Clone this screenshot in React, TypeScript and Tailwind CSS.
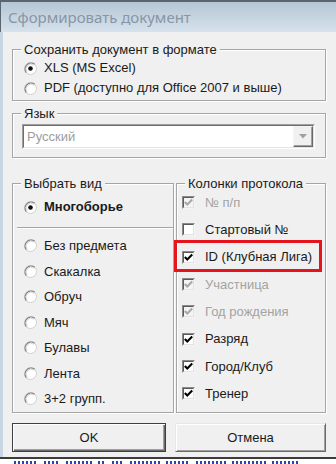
import React from "react";

function Radio({ checked }: { checked?: boolean }) {
  return (
    <svg width="13" height="13" viewBox="0 0 13 13" className="shrink-0">
      <circle cx="6.5" cy="6.5" r="6" fill="#fff" stroke="#cfcfcf" strokeWidth="1" />
      <path d="M2.3 10.7 A6 6 0 0 1 10.7 2.3" fill="none" stroke="#858585" strokeWidth="1.3" />
      <path d="M3.2 9.8 A4.7 4.7 0 0 1 9.8 3.2" fill="none" stroke="#d4d4d4" strokeWidth="1" />
      {checked && <circle cx="6.5" cy="6.5" r="2.3" fill="#111" />}
    </svg>
  );
}

function Check({ checked, disabled }: { checked?: boolean; disabled?: boolean }) {
  return (
    <div
      className={
        "w-[13px] h-[13px] shrink-0 border border-t-[#8a8a8a] border-l-[#8a8a8a] border-b-[#f4f4f4] border-r-[#f4f4f4] " +
        (disabled ? "bg-[#f4f4f4]" : "bg-white")
      }
    >
      <div className="w-full h-full border border-t-[#5a5a5a] border-l-[#5a5a5a] border-b-[#e3e3e3] border-r-[#e3e3e3] flex items-center justify-center">
        {checked && (
          <svg width="9" height="9" viewBox="0 0 9 9">
            <path
              d="M0.8 4 L3.3 6.6 L8.2 1.6"
              fill="none"
              stroke={disabled ? "#a8a8a8" : "#000"}
              strokeWidth="2.1"
            />
          </svg>
        )}
      </div>
    </div>
  );
}

function GroupBox({
  title,
  className,
  children,
}: {
  title: string;
  className?: string;
  children?: React.ReactNode;
}) {
  return (
    <div
      className={
        "relative border border-[#a5a5a5] shadow-[inset_1px_1px_0_#fff,1px_1px_0_#fff] " +
        (className ?? "")
      }
    >
      <div className="absolute -top-[8px] left-[8px] px-[3px] bg-[#f0f0f0] leading-[15px] text-[13px] text-[#1a1a1a]">
        {title}
      </div>
      {children}
    </div>
  );
}

function RadioRow({
  label,
  checked,
  bold,
  h,
}: {
  label: string;
  checked?: boolean;
  bold?: boolean;
  h: string;
}) {
  return (
    <div className={"flex items-center gap-[7px] " + h}>
      <Radio checked={checked} />
      <span className={"text-[13px] text-[#1a1a1a] " + (bold ? "font-bold" : "")}>{label}</span>
    </div>
  );
}

function CheckRow({
  label,
  checked,
  disabled,
}: {
  label: string;
  checked?: boolean;
  disabled?: boolean;
}) {
  return (
    <div className="flex items-center gap-[10px] h-[27.3px]">
      <Check checked={checked} disabled={disabled} />
      <span className={"text-[13px] " + (disabled ? "text-[#a3a3a3]" : "text-[#1a1a1a]")}>
        {label}
      </span>
    </div>
  );
}

export default function App() {
  const frags = [
    [14, 24],
    [44, 16],
    [66, 26],
    [98, 8],
    [112, 12],
    [130, 30],
    [166, 22],
    [196, 30],
    [232, 34],
    [272, 28],
  ];
  return (
    <div className="w-[336px] h-[464px] overflow-hidden flex flex-col bg-[#f0f0f0] font-['Liberation_Sans',Arial,sans-serif]">
      {/* Title bar */}
      <div className="h-[32px] shrink-0 border-t-2 border-l border-[#5b6570] bg-linear-to-b from-[#b6c6d5] to-[#d6e2ed] flex items-center pl-[7px]">
        <span className="text-[15px] text-[#8796a5] font-['Noto_Sans',sans-serif] leading-none pt-[1px]">
          Сформировать документ
        </span>
      </div>

      {/* Body */}
      <div className="h-[425px] shrink-0 border-l-[3px] border-[#c8d5e2] pl-[9px] pr-[10px] pt-[17px] flex flex-col">
        <GroupBox title="Сохранить документ в формате" className="h-[52px] pt-[8px] pl-[11px]">
          <RadioRow label="XLS (MS Excel)" checked h="h-[20px]" />
          <RadioRow label="PDF (доступно для Office 2007 и выше)" h="h-[20px]" />
        </GroupBox>

        <GroupBox title="Язык" className="mt-[12px] h-[45px] pt-[10px] pl-[9px]">
          <div className="w-[293px] h-[25px] border border-t-[#a0a0a0] border-l-[#a0a0a0] border-b-white border-r-white">
            <div className="w-full h-full border border-t-[#6e6e6e] border-l-[#6e6e6e] border-b-[#e3e3e3] border-r-[#e3e3e3] bg-white flex items-stretch">
              <div className="flex-1 flex items-center pl-[3px] text-[13px] text-[#9d9d9d]">Русский</div>
              <div className="w-[20px] bg-[#f0f0f0] border border-t-[#f4f4f4] border-l-[#f4f4f4] border-b-[#6a6a6a] border-r-[#6a6a6a] shadow-[inset_-1px_-1px_0_#a0a0a0] flex items-center justify-center">
                <svg width="8" height="5" viewBox="0 0 8 5">
                  <path d="M0 0 H8 L4 4.5 Z" fill="#a0a0a0" />
                </svg>
              </div>
            </div>
          </div>
        </GroupBox>

        <div className="mt-[25px] h-[230px] flex gap-[2px]">
          <GroupBox title="Выбрать вид" className="w-[162px] h-full pt-[10px]">
            <div className="pl-[11px]">
              <RadioRow label="Многоборье" checked bold h="h-[26px]" />
            </div>
            <div className="mt-[7px] ml-[4px] h-[2px] border-t border-[#a5a5a5] bg-white" />
            <div className="mt-[4px] pl-[11px]">
              <RadioRow label="Без предмета" h="h-[25.5px]" />
              <RadioRow label="Скакалка" h="h-[25.5px]" />
              <RadioRow label="Обруч" h="h-[25.5px]" />
              <RadioRow label="Мяч" h="h-[25.5px]" />
              <RadioRow label="Булавы" h="h-[25.5px]" />
              <RadioRow label="Лента" h="h-[25.5px]" />
              <RadioRow label="3+2 групп." h="h-[25.5px]" />
            </div>
          </GroupBox>

          <GroupBox title="Колонки протокола" className="flex-1 h-full pt-[5px] pl-[5px]">
            <CheckRow label="№ п/п" checked disabled />
            <CheckRow label="Стартовый №" />
            <CheckRow label="ID (Клубная Лига)" checked />
            <CheckRow label="Участница" checked disabled />
            <CheckRow label="Год рождения" checked disabled />
            <CheckRow label="Разряд" checked />
            <CheckRow label="Город/Клуб" checked />
            <CheckRow label="Тренер" checked />
            <div className="absolute left-[-3px] top-[56px] w-[148px] h-[32px] border-[3px] border-[#e5141c]" />
          </GroupBox>
        </div>

        <div className="mt-[10px] h-[29px] flex">
          <button className="w-[154px] h-full border border-[#3f3f3f] bg-[#f0f0f0] shadow-[inset_1px_1px_0_#fff,inset_-1px_-1px_0_#6a6a6a,inset_-2px_-2px_0_#a0a0a0] text-[13px] text-[#1a1a1a] flex items-center justify-center">
            OK
          </button>
          <button className="ml-auto w-[151px] h-full border border-t-[#e6e6e6] border-l-[#e6e6e6] border-b-[#6a6a6a] border-r-[#6a6a6a] bg-[#f0f0f0] shadow-[inset_1px_1px_0_#fff,inset_-1px_-1px_0_#a0a0a0] text-[13px] text-[#1a1a1a] flex items-center justify-center">
            Отмена
          </button>
        </div>
      </div>

      {/* Bottom frame edge + peek of the document underneath */}
      <div className="h-[2px] shrink-0 bg-[#3c3c3c]" />
      <div className="h-[5px] shrink-0 bg-white relative">
        {frags.map(([x, w], i) => (
          <div
            key={i}
            className="absolute top-[2px] h-[3px] bg-[repeating-linear-gradient(90deg,#2a46a8_0_2px,transparent_2px_4px)]"
            style={{ left: x, width: w }}
          />
        ))}
      </div>
    </div>
  );
}
